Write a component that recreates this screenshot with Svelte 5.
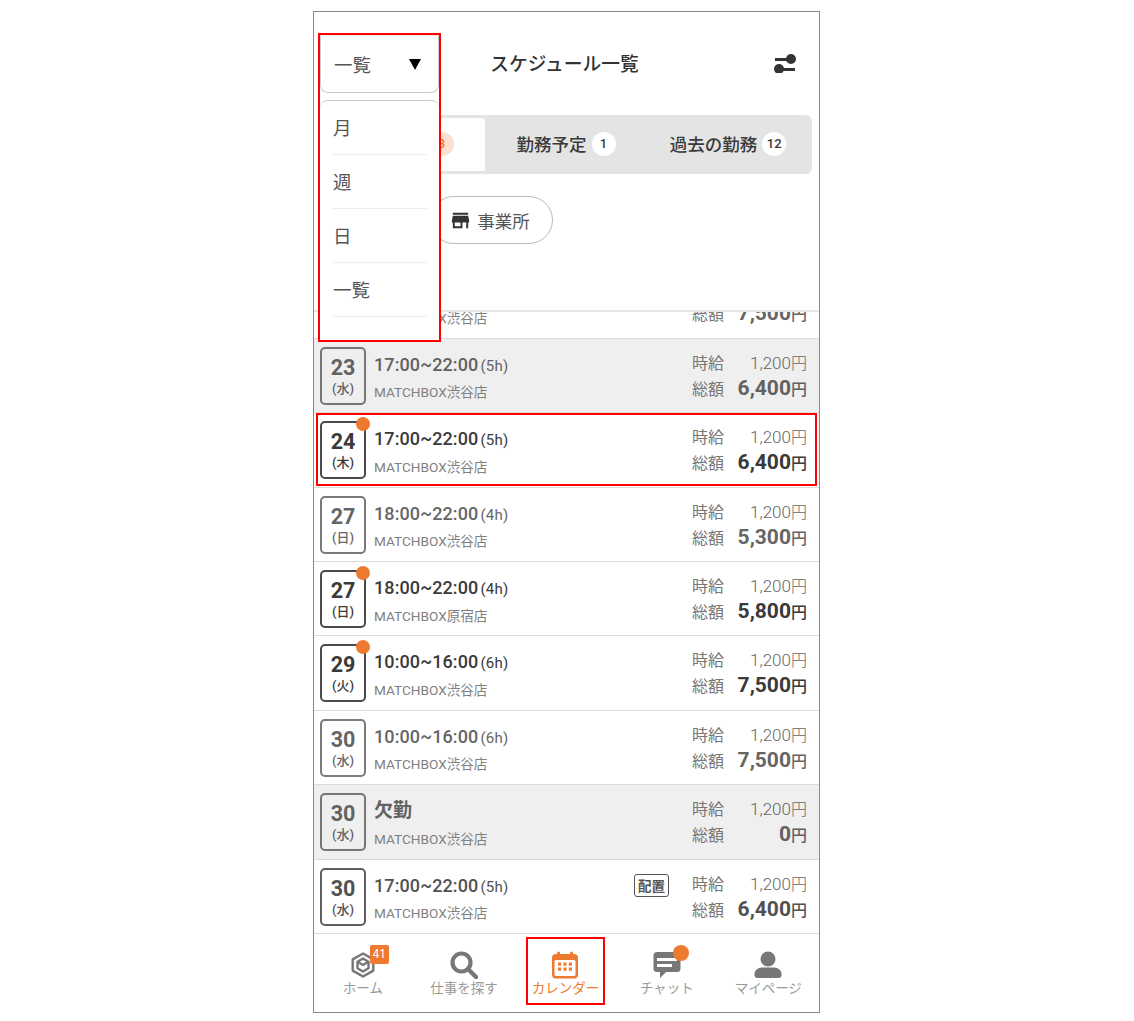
<script>
  const rows = [
    { d: '29', w: '火', t: '10:00~16:00', h: '(6h)', shop: 'MATCHBOX渋谷店', total: '7,500', dim: true },
    { d: '23', w: '水', t: '17:00~22:00', h: '(5h)', shop: 'MATCHBOX渋谷店', total: '6,400', dim: true, gray: true },
    { d: '24', w: '木', t: '17:00~22:00', h: '(5h)', shop: 'MATCHBOX渋谷店', total: '6,400', dot: true },
    { d: '27', w: '日', t: '18:00~22:00', h: '(4h)', shop: 'MATCHBOX渋谷店', total: '5,300', dim: true },
    { d: '27', w: '日', t: '18:00~22:00', h: '(4h)', shop: 'MATCHBOX原宿店', total: '5,800', dot: true },
    { d: '29', w: '火', t: '10:00~16:00', h: '(6h)', shop: 'MATCHBOX渋谷店', total: '7,500', dot: true },
    { d: '30', w: '水', t: '10:00~16:00', h: '(6h)', shop: 'MATCHBOX渋谷店', total: '7,500', dim: true },
    { d: '30', w: '水', t: '欠勤', h: '', shop: 'MATCHBOX渋谷店', total: '0', dim: true, gray: true, absent: true },
    { d: '30', w: '水', t: '17:00~22:00', h: '(5h)', shop: 'MATCHBOX渋谷店', total: '6,400', tag: '配置', soft: true }
  ];
  const menu = ['月', '週', '日', '一覧'];
</script>

<div class="frame">
  <header class="top">
    <div class="titlebar">
      <h1>スケジュール一覧</h1>
      <svg class="filter" width="22" height="20" viewBox="0 0 22 20" aria-hidden="true">
        <path d="M1 6.500h15M7 16.500h14" stroke="#333" stroke-width="3"/>
        <circle cx="17" cy="6" r="5" fill="#333"/>
        <circle cx="5" cy="16" r="5" fill="#333"/>
      </svg>
    </div>
    <div class="tabs">
      <div class="tab active">勤務確定<span class="count hot">3</span></div>
      <div class="tab">勤務予定<span class="count">1</span></div>
      <div class="tab">過去の勤務<span class="count">12</span></div>
    </div>
    <div class="chips">
      <div class="chip first">期間</div>
      <div class="chip">
        <svg width="23" height="23" viewBox="0 0 24 24" aria-hidden="true"><path fill="#333" d="M20 4H4v2h16V4zm1 10v-2l-1-5H4l-1 5v2h1v6h10v-6h4v6h2v-6h1zm-9 4H6v-4h6v4z"/></svg>
        事業所
      </div>
    </div>
  </header>

  <div class="list">
    {#each rows as r}
      <div class="row" class:gray={r.gray} class:dim={r.dim} class:soft={r.soft}>
        <div class="date" class:dotted={r.dot}>
          <b>{r.d}</b>
          <span>({r.w})</span>
        </div>
        <div class="info">
          <div class="time" class:absent={r.absent}>{r.t}<small>{r.h}</small></div>
          <div class="shop">{r.shop}</div>
        </div>
        {#if r.tag}<div class="tag">{r.tag}</div>{/if}
        <div class="pay">
          <span class="lbl">時給</span><span class="rate">1,200<i>円</i></span>
          <span class="lbl">総額</span><span class="total">{r.total}<i>円</i></span>
        </div>
      </div>
    {/each}
  </div>

  <nav class="nav">
    <div class="item">
      <div class="icon">
        <svg width="28" height="28" viewBox="0 0 28 28" aria-hidden="true">
          <g fill="none" stroke="#777" stroke-width="2.400" stroke-linejoin="round">
            <path d="M14 2.500 24.300 8.400v11.200L14 25.500 3.700 19.600V8.400z"/>
            <path d="M14 7.500 19.500 10.800v6.400L14 20.500 8.500 17.200v-6.400z"/>
            <path d="M8.500 10.800 14 14l5.500-3.200"/>
          </g>
        </svg>
        <span class="num">41</span>
      </div>
      <span>ホーム</span>
    </div>
    <div class="item">
      <div class="icon">
        <svg width="28" height="28" viewBox="0 0 28 28" aria-hidden="true">
          <circle cx="11.500" cy="11.500" r="9" fill="none" stroke="#777" stroke-width="4.200"/>
          <path d="M18 18l8 8" stroke="#777" stroke-width="4.500" stroke-linecap="round"/>
        </svg>
      </div>
      <span>仕事を探す</span>
    </div>
    <div class="item on">
      <div class="icon">
        <svg width="28" height="28" viewBox="0 0 28 28" aria-hidden="true">
          <rect x="1" y="3" width="26" height="24.500" rx="4" fill="#ee7a30"/>
          <rect x="6" y="0.500" width="3" height="6" rx="1.500" fill="#ee7a30"/>
          <rect x="19" y="0.500" width="3" height="6" rx="1.500" fill="#ee7a30"/>
          <rect x="3.500" y="9" width="21" height="16" rx="1.500" fill="#fff"/>
          <g fill="#ee7a30">
            <rect x="7" y="11.500" width="3.200" height="3.200"/><rect x="12.400" y="11.500" width="3.200" height="3.200"/><rect x="17.800" y="11.500" width="3.200" height="3.200"/>
            <rect x="7" y="16.500" width="3.200" height="3.200"/><rect x="12.400" y="16.500" width="3.200" height="3.200"/><rect x="17.800" y="16.500" width="3.200" height="3.200"/>
          </g>
        </svg>
      </div>
      <span>カレンダー</span>
    </div>
    <div class="item">
      <div class="icon">
        <svg width="28" height="28" viewBox="0 0 28 28" aria-hidden="true">
          <path fill="#777" d="M4 1h20a3.500 3.500 0 0 1 3.500 3.500v13A3.500 3.500 0 0 1 24 21H13l-6 6v-6H4A3.500 3.500 0 0 1 .5 17.500v-13A3.500 3.500 0 0 1 4 1z"/>
          <path d="M4 8.500h20M4 14.500h15" stroke="#fff" stroke-width="2.800"/>
        </svg>
        <span class="pip"></span>
      </div>
      <span>チャット</span>
    </div>
    <div class="item">
      <div class="icon">
        <svg width="28" height="28" viewBox="0 0 28 28" aria-hidden="true">
          <circle cx="14" cy="8" r="7.500" fill="#777"/>
          <path fill="#777" d="M8 16.500h12c4.500 0 7.500 3 7.500 6.500v1c0 2-1 3-3 3h-21c-2 0-3-1-3-3v-1c0-3.500 3-6.500 7.500-6.500z"/>
        </svg>
      </div>
      <span>マイページ</span>
    </div>
  </nav>

  <div class="dropdown">
    <div class="select">一覧<span class="caret"></span></div>
    <ul class="panel">
      {#each menu as m}<li>{m}</li>{/each}
    </ul>
  </div>
  <div class="mark mark-row"></div>
  <div class="mark mark-nav"></div>
</div>

<style>
  :global(body) {
    margin: 0;
    background: #fff;
  }
  .frame {
    position: relative;
    box-sizing: border-box;
    width: 507px;
    height: 1002px;
    margin: 11px 0 0 313px;
    border: 1px solid #888;
    display: flex;
    flex-direction: column;
    overflow: hidden;
    background: #fff;
    color: #333;
    opacity: 0.999;
    font-family: Roboto, "Noto Sans CJK JP", sans-serif;
  }
  .top {
    flex: 0 0 298px;
    padding: 0 7px 0 6px;
    border-bottom: 2px solid #e6e6e6;
  }
  .titlebar {
    box-sizing: border-box;
    height: 103px;
    display: flex;
    align-items: center;
    justify-content: center;
    position: relative;
    padding: 0 3px 2px 0;
  }
  h1 {
    margin: 0;
    font-size: 18.750px;
    font-weight: 500;
    color: #333;
  }
  .filter {
    position: absolute;
    right: 16px;
    top: 41px;
  }
  .tabs {
    display: grid;
    grid-template-columns: repeat(3, 162px);
    height: 59px;
    padding: 3px;
    box-sizing: border-box;
    background: #e4e4e4;
    border-radius: 6px;
  }
  .tab {
    box-sizing: border-box;
    padding-bottom: 2px;
    display: flex;
    align-items: center;
    justify-content: center;
    gap: 5px;
    font-size: 17.500px;
    font-weight: 500;
    color: #3a3a3a;
    border-radius: 3px;
    white-space: nowrap;
  }
  .tab.active {
    background: #fff;
  }
  .count {
    width: 24px;
    height: 24px;
    border-radius: 50%;
    background: #fff;
    display: flex;
    align-items: center;
    justify-content: center;
    font-size: 13px;
  }
  .count.hot {
    background: #fde1d0;
    color: #ee7a30;
  }
  .chips {
    display: flex;
    gap: 10px;
    margin-top: 22px;
  }
  .chip {
    box-sizing: border-box;
    height: 48px;
    width: 123px;
    padding-right: 4px;
    border: 1.500px solid #bbb;
    border-radius: 24px;
    display: flex;
    align-items: center;
    justify-content: center;
    gap: 5px;
    font-size: 17.500px;
    color: #555;
  }
  .chip.first {
    width: 100px;
  }
  .list {
    flex: 1;
    min-height: 0;
    display: flex;
    flex-direction: column;
    justify-content: flex-end;
    overflow: hidden;
  }
  .row {
    flex: 0 0 74.400px;
    box-sizing: border-box;
    display: flex;
    align-items: flex-start;
    padding: 8px 12px 0 6px;
    border-bottom: 1.500px solid #dcdcdc;
    background: #fff;
  }
  .row.gray {
    background: #efefef;
  }
  .date {
    position: relative;
    box-sizing: border-box;
    width: 46px;
    height: 58px;
    border: 2px solid #4a4a4a;
    border-radius: 5px;
    display: flex;
    flex-direction: column;
    align-items: center;
    justify-content: center;
    color: #3a3a3a;
  }
  .date b {
    font-size: 21.500px;
    line-height: 25px;
    font-weight: 700;
  }
  .date span {
    font-size: 13px;
    line-height: 17px;
    font-weight: 500;
  }
  .date.dotted::after {
    content: '';
    position: absolute;
    top: -6.500px;
    right: -5.500px;
    width: 14px;
    height: 14px;
    border-radius: 50%;
    background: #ee7a30;
  }
  .dim .date, .dim .time, .dim .total {
    opacity: 0.78;
  }
  .dim .date {
    border-color: #555;
  }
  .soft .date, .soft .time, .soft .total {
    opacity: 0.88;
  }
  .info {
    flex: 1;
    margin-left: 8px;
    min-width: 0;
  }
  .time {
    margin-top: 6px;
    height: 24px;
    font-size: 18px;
    line-height: 24px;
    font-weight: 500;
    letter-spacing: 0.100px;
    white-space: nowrap;
    color: #3a3a3a;
  }
  .time small {
    font-size: 15px;
    font-weight: 400;
    margin-left: 2px;
    letter-spacing: 0.300px;
  }
  .time.absent {
    font-size: 19px;
    font-weight: 700;
  }
  .shop {
    margin-top: 6.500px;
    font-size: 13.600px;
    line-height: 19px;
    color: #808080;
  }
  .tag {
    box-sizing: border-box;
    width: 35px;
    height: 23px;
    margin: 6px 23px 0 0;
    border: 1.500px solid #555;
    border-radius: 3px;
    display: flex;
    align-items: center;
    justify-content: center;
    font-size: 13.500px;
    font-weight: 700;
    color: #555;
  }
  .pay {
    display: grid;
    grid-template-columns: 32px 83px;
    align-items: center;
    grid-auto-rows: 26px;
    margin-top: 2px;
  }
  .lbl {
    font-size: 16px;
    color: #777;
  }
  .rate, .total {
    text-align: right;
    white-space: nowrap;
  }
  .rate {
    font-size: 17px;
    font-weight: 300;
    color: #666;
  }
  .rate i {
    font-style: normal;
    font-size: 16px;
  }
  .total {
    font-size: 21px;
    font-weight: 700;
    color: #3a3a3a;
  }
  .total i {
    font-style: normal;
    font-size: 16px;
    font-weight: 500;
  }
  .nav {
    flex: 0 0 78px;
    display: grid;
    grid-template-columns: repeat(5, 101.400px);
    margin-left: -2px;
  }
  .item {
    display: flex;
    flex-direction: column;
    align-items: center;
    padding-top: 17px;
    font-size: 13.500px;
    line-height: 18px;
    color: #999;
    white-space: nowrap;
  }
  .item.on {
    color: #ee7a30;
  }
  .icon {
    position: relative;
    width: 28px;
    height: 28px;
  }
  .num {
    position: absolute;
    left: 21px;
    top: -6px;
    width: 19px;
    height: 19px;
    border-radius: 2px;
    background: #ee7a30;
    color: #fff;
    font-size: 12px;
    line-height: 19px;
    text-align: center;
  }
  .pip {
    position: absolute;
    right: -8px;
    top: -6px;
    width: 16px;
    height: 16px;
    border-radius: 50%;
    background: #ee7a30;
  }
  .dropdown {
    position: absolute;
    left: 4px;
    top: 21px;
    box-sizing: border-box;
    width: 123px;
    height: 309px;
    border: 2px solid #f00;
    background: #fff;
    color: #555;
  }
  .select {
    box-sizing: border-box;
    height: 58px;
    border: 1px solid #ccc;
    border-top-color: #eee;
    border-radius: 0 0 8px 8px;
    padding: 0 17px 0 13px;
    display: flex;
    align-items: center;
    justify-content: space-between;
    font-size: 18.500px;
  }
  .caret {
    width: 0;
    height: 0;
    border-left: 6px solid transparent;
    border-right: 6px solid transparent;
    border-top: 11px solid #000;
  }
  .panel {
    list-style: none;
    box-sizing: border-box;
    height: 241px;
    margin: 7px 0 0;
    padding: 0 12px;
    border-top: 1px solid #ccc;
    border-radius: 8px 8px 0 0;
  }
  .panel li {
    box-sizing: border-box;
    height: 54px;
    padding: 1px 0 0 1px;
    border-bottom: 1px solid #eee;
    font-size: 18.500px;
    line-height: 54px;
  }
  .mark {
    position: absolute;
    box-sizing: border-box;
    border: 2px solid #f00;
    pointer-events: none;
  }
  .mark-row {
    left: 2px;
    top: 401px;
    width: 501px;
    height: 73px;
  }
  .mark-nav {
    left: 212px;
    top: 925px;
    width: 79px;
    height: 68px;
  }
</style>
